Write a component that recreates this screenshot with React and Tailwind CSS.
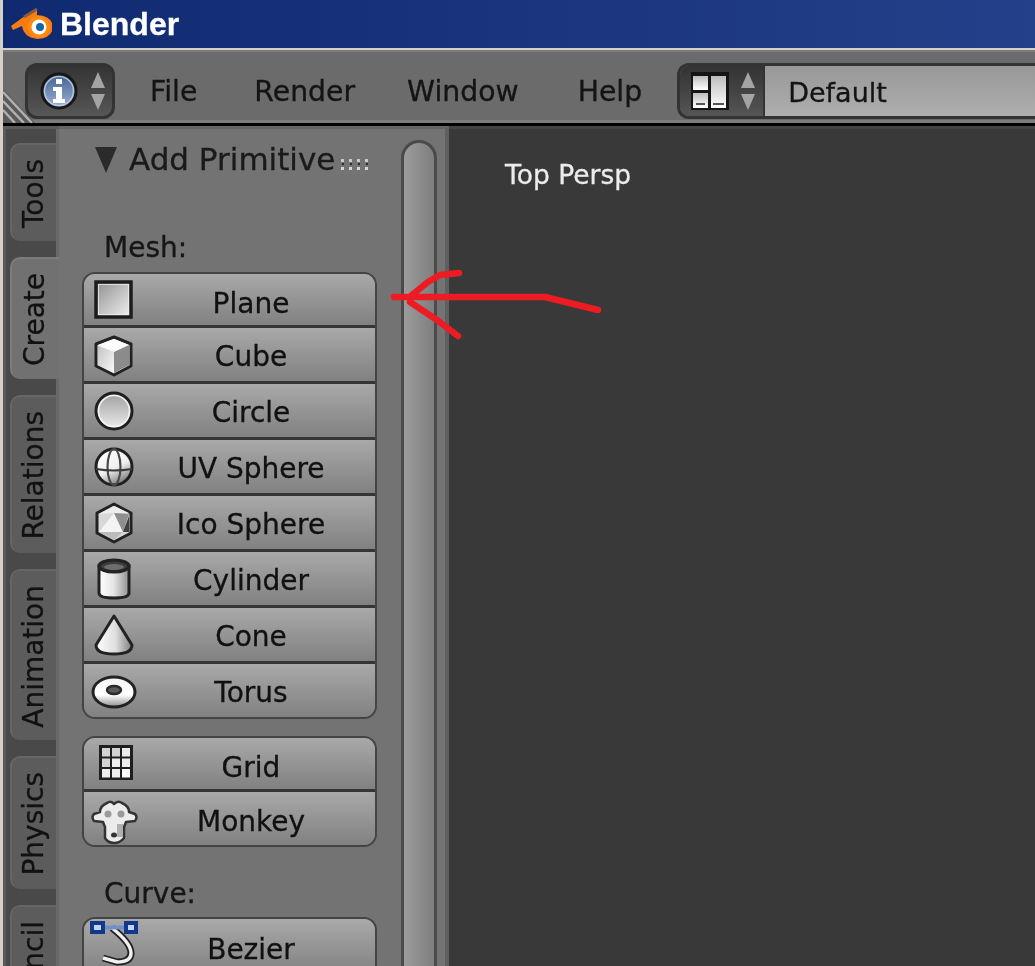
import React from "react";

const sans = "font-['DejaVu_Sans',sans-serif]";

const Defs = () => (
  <svg className="absolute w-0 h-0">
    <defs>
      <linearGradient id="plane" x1="0" y1="0" x2="1" y2="1">
        <stop offset="0" stopColor="#8f8f8f" />
        <stop offset="1" stopColor="#f2f2f2" />
      </linearGradient>
      <linearGradient id="light" x1="0" y1="0" x2="1" y2="1">
        <stop offset="0" stopColor="#c5c5c5" />
        <stop offset="1" stopColor="#f8f8f8" />
      </linearGradient>
      <linearGradient id="sphere" x1="0.2" y1="0" x2="0.7" y2="1">
        <stop offset="0" stopColor="#ffffff" />
        <stop offset="0.55" stopColor="#efefef" />
        <stop offset="1" stopColor="#6f6f6f" />
      </linearGradient>
      <linearGradient id="ring" x1="0" y1="0" x2="0" y2="1">
        <stop offset="0" stopColor="#f4f4f4" />
        <stop offset="0.6" stopColor="#ffffff" />
        <stop offset="1" stopColor="#8c8c8c" />
      </linearGradient>
      <linearGradient id="circle" x1="0" y1="0" x2="0" y2="1">
        <stop offset="0" stopColor="#9f9f9f" />
        <stop offset="1" stopColor="#ededed" />
      </linearGradient>
      <linearGradient id="cyl" x1="0" y1="0" x2="1" y2="0">
        <stop offset="0" stopColor="#ffffff" />
        <stop offset="0.5" stopColor="#e4e4e4" />
        <stop offset="1" stopColor="#8e8e8e" />
      </linearGradient>
      <linearGradient id="cone" x1="0" y1="0" x2="1" y2="0">
        <stop offset="0" stopColor="#ffffff" />
        <stop offset="0.55" stopColor="#dddddd" />
        <stop offset="1" stopColor="#7d7d7d" />
      </linearGradient>
      <linearGradient id="info" x1="0" y1="0" x2="0" y2="1">
        <stop offset="0" stopColor="#3f5f92" />
        <stop offset="1" stopColor="#9fb4d2" />
      </linearGradient>
      <linearGradient id="panelIcon" x1="0" y1="0" x2="0" y2="1">
        <stop offset="0" stopColor="#bdbdbd" />
        <stop offset="1" stopColor="#ffffff" />
      </linearGradient>
    </defs>
  </svg>
);

const Icon = ({ children }) => (
  <svg viewBox="0 0 44 44" className="w-[44px] h-[44px] shrink-0 overflow-visible">
    {children}
  </svg>
);

const PlaneIcon = () => (
  <Icon>
    <rect x="3" y="4" width="35" height="35" fill="url(#plane)" stroke="#1c1c1c" strokeWidth="3.5" />
    <rect x="5.5" y="6.5" width="30" height="30" fill="none" stroke="#eeeeee" strokeWidth="1" opacity="0.8" />
  </Icon>
);

const CubeIcon = () => (
  <Icon>
    <path d="M21 4 L38 11 V33 L21 42 L3 33 V11 Z" fill="#e4e4e4" stroke="#222" strokeWidth="3" strokeLinejoin="round" />
    <path d="M21 6 L36 12 L21 19 L5 12 Z" fill="#fbfbfb" />
    <path d="M21 19 L36 12 V32 L21 40 Z" fill="#8b8b8b" />
    <path d="M5 13 L21 19 V40 L5 32 Z" fill="url(#light)" />
  </Icon>
);

const CircleIcon = () => (
  <Icon>
    <circle cx="21" cy="22" r="18" fill="url(#circle)" stroke="#1f1f1f" strokeWidth="3" />
    <circle cx="21" cy="22" r="15.5" fill="none" stroke="#f4f4f4" strokeWidth="1.5" />
  </Icon>
);

const UvIcon = () => (
  <Icon>
    <circle cx="21" cy="22" r="18" fill="url(#sphere)" stroke="#1f1f1f" strokeWidth="3" />
    <ellipse cx="21" cy="22" rx="6.5" ry="18" fill="none" stroke="#4a4a4a" strokeWidth="2.2" />
    <path d="M3 24 Q21 27 39 24" fill="none" stroke="#3a3a3a" strokeWidth="2.2" />
  </Icon>
);

const IcoIcon = () => (
  <Icon>
    <path d="M21 3 L38 12 V32 L21 41 L4 32 V12 Z" fill="#d8d8d8" stroke="#222" strokeWidth="3" strokeLinejoin="round" />
    <path d="M21 12 L6 31 H30 Z" fill="#f4f4f4" />
    <path d="M21 12 L36 13 L30 31 Z" fill="#8f8f8f" />
    <path d="M6 31 L21 39 L30 31 Z" fill="#bcbcbc" />
    <path d="M30 31 L36 31 V15 Z" fill="#3f3f3f" />
    <path d="M21 5 L36 12 L21 12 L6 13 Z" fill="#ededed" />
  </Icon>
);

const CylinderIcon = () => (
  <Icon>
    <path d="M6 9 V36 Q6 41 21 41 Q36 41 36 36 V9 Z" fill="url(#cyl)" stroke="#222" strokeWidth="3" />
    <ellipse cx="21" cy="9" rx="15" ry="6" fill="#3c3c3c" stroke="#222" strokeWidth="3" />
    <ellipse cx="21" cy="10" rx="10" ry="3" fill="#6e6e6e" />
  </Icon>
);

const ConeIcon = () => (
  <Icon>
    <path d="M21 3 L39 32 Q39 41 21 41 Q3 41 3 32 Z" fill="url(#cone)" stroke="#222" strokeWidth="3" strokeLinejoin="round" />
  </Icon>
);

const TorusIcon = () => (
  <Icon>
    <ellipse cx="21" cy="23" rx="21" ry="15" fill="url(#ring)" stroke="#222" strokeWidth="3" />
    <ellipse cx="21" cy="21" rx="7" ry="4" fill="#5a5a5a" stroke="#2a2a2a" strokeWidth="2.5" />
  </Icon>
);

const GridIcon = () => (
  <Icon>
    <rect x="6" y="3" width="34" height="35" fill="#1f1f1f" />
    {[0, 1, 2].map((r) =>
      [0, 1, 2].map((c) => (
        <rect key={`${r}${c}`} x={9 + c * 10} y={6 + r * 10.5} width="8" height="8.5" fill={r + c > 3 ? "#ffffff" : r + c > 1 ? "#ededed" : "#d2d2d2"} />
      ))
    )}
  </Icon>
);

const MonkeyIcon = () => (
  <Icon>
    <path d="M14 6 Q18 3 21 7 Q25 3 29 6 Q36 9 36 15 L42 17 Q45 20 42 24 L33 25 L31 30 V41 Q27 46 21 46 Q15 46 12 41 V30 L10 25 L1 24 Q-2 20 1 17 L7 15 Q7 9 14 6 Z" fill="#ececec" stroke="#333" strokeWidth="2.5" strokeLinejoin="round" />
    <circle cx="15" cy="17" r="3.5" fill="#9a9a9a" />
    <circle cx="28" cy="17" r="3.5" fill="#9a9a9a" />
    <path d="M24 27 H30 V40 H24 Z" fill="#b0b0b0" />
    <ellipse cx="21" cy="38" rx="3" ry="2.5" fill="#333" />
  </Icon>
);

const BezierIcon = () => (
  <Icon>
    <path d="M19 3 Q38 18 38 28 Q38 37 24 37 L10 33" fill="none" stroke="#222" strokeWidth="7" />
    <path d="M19 3 Q38 18 38 28 Q38 37 24 37 L10 33" fill="none" stroke="#f0f0f0" strokeWidth="3.5" />
    <path d="M8 2.5 H36" stroke="#6f8fc8" strokeWidth="4" />
    <rect x="-1" y="-2" width="11" height="9" fill="#c4d4f2" stroke="#10398c" strokeWidth="4" />
    <rect x="33" y="-2" width="10" height="9" fill="#c4d4f2" stroke="#10398c" strokeWidth="4" />
  </Icon>
);

const UpDown = () => (
  <svg viewBox="0 0 16 38" className="w-[16px] h-[38px] shrink-0">
    <path d="M8 0 L15 16 H1 Z" fill="#a4a4a4" />
    <path d="M8 38 L15 22 H1 Z" fill="#a4a4a4" />
  </svg>
);

const Logo = () => (
  <svg viewBox="0 0 44 36" className="w-[44px] h-[36px] shrink-0 ml-[5px]">
    <path d="M29 3 L14 12 L3 20 L5 24 L14 20 Q16 32 30 33 Q44 32 45 21 Q44 10 29 9 Z" fill="#f57c12" />
    <path d="M29 3 L16 11" stroke="#8a5a3a" strokeWidth="3" />
    <circle cx="31" cy="21" r="11" fill="#ff8a12" />
    <circle cx="31" cy="21" r="7.5" fill="#ffffff" />
    <circle cx="32" cy="21" r="4" fill="#1465ac" />
  </svg>
);

const InfoIcon = () => (
  <svg viewBox="0 0 38 38" className="w-[38px] h-[38px] shrink-0">
    <circle cx="19" cy="19" r="17" fill="url(#info)" stroke="#181818" strokeWidth="3" />
    <circle cx="19" cy="19" r="14.5" fill="none" stroke="#c4d2e6" strokeWidth="1.5" opacity="0.8" />
    <rect x="16" y="7" width="6" height="5" fill="#fff" />
    <path d="M13 15 H22 V27 H25 V31 H13 V27 H16 V19 H13 Z" fill="#fff" />
  </svg>
);

const LayoutIcon = () => (
  <svg viewBox="0 0 38 38" className="w-[38px] h-[38px] shrink-0">
    <rect x="0" y="0" width="38" height="38" fill="#151515" />
    <rect x="2" y="4" width="15" height="14" fill="url(#panelIcon)" />
    <rect x="2" y="21" width="15" height="15" fill="url(#panelIcon)" />
    <rect x="20" y="4" width="15" height="32" fill="url(#panelIcon)" />
    <rect x="5" y="31" width="9" height="2" fill="#555" />
    <rect x="22" y="31" width="11" height="2" fill="#555" />
  </svg>
);

const Grip = () => (
  <svg viewBox="0 0 30 12" className="w-[30px] h-[12px] ml-[6px] mt-[15px] shrink-0">
    {[0, 1, 2, 3].map((i) => (
      <g key={i}>
        <rect x={i * 8} y="0" width="3" height="3" fill="#c9c9c9" />
        <rect x={i * 8} y="8" width="3" height="3" fill="#d5d5d5" />
        <rect x={i * 8 + 1} y="4" width="2" height="2" fill="#2d2d2d" />
      </g>
    ))}
  </svg>
);

const Row = ({ icon, label, rowClass, labelClass, first }) => (
  <div
    className={`flex items-center pl-[9px] bg-linear-to-b from-[#a9a9a9] to-[#818181] ${rowClass} ${first ? "" : "border-t-[3px] border-[#353535]"}`}
  >
    {icon}
    <span className={`flex-1 text-center text-[28px] leading-none text-[#111] pr-[10px] ${labelClass}`}>{label}</span>
  </div>
);

const Group = ({ rows, className = "" }) => (
  <div className={`w-[295px] rounded-[13px] border-[2.5px] border-[#444] overflow-hidden ${className}`}>
    {rows.map((r, i) => (
      <Row key={r.label} {...r} first={i === 0} />
    ))}
  </div>
);

const meshRows = [
  { label: "Plane", icon: <PlaneIcon />, rowClass: "h-[51px]", labelClass: "pt-[9px]" },
  { label: "Cube", icon: <CubeIcon />, rowClass: "h-[56px]", labelClass: "pt-[5px]" },
  { label: "Circle", icon: <CircleIcon />, rowClass: "h-[56px]", labelClass: "pt-[5px]" },
  { label: "UV Sphere", icon: <UvIcon />, rowClass: "h-[56px]", labelClass: "pt-[5px]" },
  { label: "Ico Sphere", icon: <IcoIcon />, rowClass: "h-[56px]", labelClass: "pt-[5px]" },
  { label: "Cylinder", icon: <CylinderIcon />, rowClass: "h-[56px]", labelClass: "pt-[5px]" },
  { label: "Cone", icon: <ConeIcon />, rowClass: "h-[56px]", labelClass: "pt-[5px]" },
  { label: "Torus", icon: <TorusIcon />, rowClass: "h-[56px]", labelClass: "pt-[5px]" },
];

const extraRows = [
  { label: "Grid", icon: <GridIcon />, rowClass: "h-[51px]", labelClass: "pt-[9px]" },
  { label: "Monkey", icon: <MonkeyIcon />, rowClass: "h-[56px]", labelClass: "pt-[7px]" },
];

const curveRows = [
  { label: "Bezier", icon: <BezierIcon />, rowClass: "h-[56px]", labelClass: "pt-[5px]" },
];

const tabs = ["Tools", "Create", "Relations", "Animation", "Physics", "Pencil"];

const Tab = ({ name }) => {
  const active = name === "Create";
  return (
    <div
      className={`flex items-center justify-center pt-[14px] pb-[13px] rounded-tl-[10px] rounded-bl-[10px] shrink-0 border-t-[2px] border-l-[2px] ${
        active ? "w-[49px] bg-[#717171] border-[#7c7c7c]" : "w-[46px] bg-[#5c5c5c] border-[#666]"
      }`}
    >
      <span className="[writing-mode:vertical-rl] rotate-180 text-[28px] leading-[28px] text-[#111] mr-[1px]">
        {name}
      </span>
    </div>
  );
};

const Menu = ({ name, className }) => (
  <span className={`text-[28.3px] leading-none text-[#141414] pt-[3px] ${className}`}>{name}</span>
);

export default function App() {
  return (
    <div className={`relative w-[1035px] h-[966px] overflow-hidden bg-[#d4d0c8] blur-[0.4px] [-webkit-text-stroke:0.3px] ${sans}`}>
      <Defs />

      {/* Window title bar */}
      <div className="h-[48px] ml-[3px] flex items-center bg-linear-to-r from-[#0f2a70] to-[#24408a]">
        <Logo />
        <span className="ml-[8px] font-['Liberation_Sans',sans-serif] font-bold text-[32px] leading-none text-white">
          Blender
        </span>
      </div>
      <div className="h-[2px] bg-[#d4d0c8]" />

      <div className="ml-[3px] h-[916px] flex flex-col">
        {/* Info header */}
        <div className="relative h-[73px] shrink-0 flex items-center pl-[22px] pt-[9px] bg-[#6b6b6b] border-t-[2px] border-b-[3px] border-t-[#7c7c7c] border-b-[#7c7c7c]">
          <svg viewBox="0 0 32 34" className="absolute left-0 bottom-[-3px] w-[32px] h-[34px]">
            <path d="M0 0 L32 34 H0 Z" fill="#5a5a5a" />
            <path d="M0 3 L29 34 M0 12 L21 34 M0 21 L12 34" stroke="#b0b0b0" strokeWidth="2.5" />
          </svg>

          <div className="relative flex items-center gap-[12px] w-[90px] h-[56px] pl-[12px] rounded-[12px] border-[3px] border-[#333] bg-linear-to-b from-[#343434] to-[#575757]">
            <InfoIcon />
            <UpDown />
          </div>

          <Menu name="File" className="ml-[35px]" />
          <Menu name="Render" className="ml-[57px]" />
          <Menu name="Window" className="ml-[52px]" />
          <Menu name="Help" className="ml-[59px]" />

          <div className="ml-[35px] flex h-[56px] flex-1 rounded-l-[12px] border-y-[3px] border-l-[3px] border-[#333] overflow-hidden">
            <div className="w-[85px] flex items-center gap-[11px] pl-[11px] border-r-[2px] border-[#333] bg-linear-to-b from-[#333333] to-[#555555]">
              <LayoutIcon />
              <UpDown />
            </div>
            <div className="flex-1 flex items-center pl-[23px] pt-[3px] bg-linear-to-b from-[#989898] to-[#aeaeae]">
              <span className="text-[27px] leading-none text-[#141414]">Default</span>
            </div>
          </div>
        </div>
        <div className="h-[3px] shrink-0 bg-black" />

        <div className="flex flex-1 min-h-0">
          {/* Tool tabs */}
          <div className="w-[56px] shrink-0 pl-[4px] pt-[14px] flex flex-col gap-[16px] bg-linear-to-r from-[#494949] from-[50px] to-[#696969] to-[50px] border-t-[3px] border-l-[3px] border-t-[#5c5c5c] border-l-[#595959] overflow-hidden">
            {tabs.map((t) => (
              <Tab key={t} name={t} />
            ))}
          </div>

          {/* Tool shelf */}
          <div className="w-[390px] shrink-0 flex bg-[#737373] border-t-[3px] border-r-[4px] border-t-[#666] border-r-[#5f5f5f]">
            <div className="w-[295px] ml-[23px] shrink-0">
              <div className="flex items-start h-[53px] pl-[13px] pt-[15px]">
                <svg viewBox="0 0 22 26" className="w-[22px] h-[26px] mt-[3px] shrink-0">
                  <path d="M0 0 H22 L11 26 Z" fill="#2b2b2b" />
                </svg>
                <span className="ml-[12px] text-[31px] leading-none text-[#1a1a1a] whitespace-nowrap">Add Primitive</span>
                <Grip />
              </div>
              <div className="h-[90px] pl-[22px] pt-[52px] text-[28px] leading-none text-[#161616]">Mesh:</div>
              <Group rows={meshRows} />
              <Group rows={extraRows} className="mt-[17px]" />
              <div className="h-[70px] pl-[22px] pt-[33px] text-[28px] leading-none text-[#161616]">Curve:</div>
              <Group rows={curveRows} />
            </div>
            <div className="ml-[24px] mt-[11px] w-[36px] rounded-t-[18px] border-[3px] border-b-0 border-[#4a4a4a] bg-linear-to-r from-[#9c9c9c] to-[#7e7e7e]" />
          </div>

          {/* 3D view */}
          <div className="flex-1 bg-[#393939] pl-[56px] pt-[33px] border-t-[3px] border-[#444]">
            <span className="text-[26.5px] leading-none text-[#ececec] whitespace-nowrap">Top Persp</span>
          </div>
        </div>
      </div>

      {/* Red arrow annotation drawn over the screenshot */}
      <svg viewBox="0 0 1035 966" className="absolute inset-0 w-[1035px] h-[966px] pointer-events-none">
        <g fill="none" stroke="#ed1c24" strokeWidth="6.5" strokeLinecap="round" strokeLinejoin="round">
          <path d="M394 297 H545 L598 310" />
          <path d="M459 273 L440 275 L428 282 L412 295" />
          <path d="M410 302 L437 320 L458 336" />
        </g>
      </svg>
    </div>
  );
}
